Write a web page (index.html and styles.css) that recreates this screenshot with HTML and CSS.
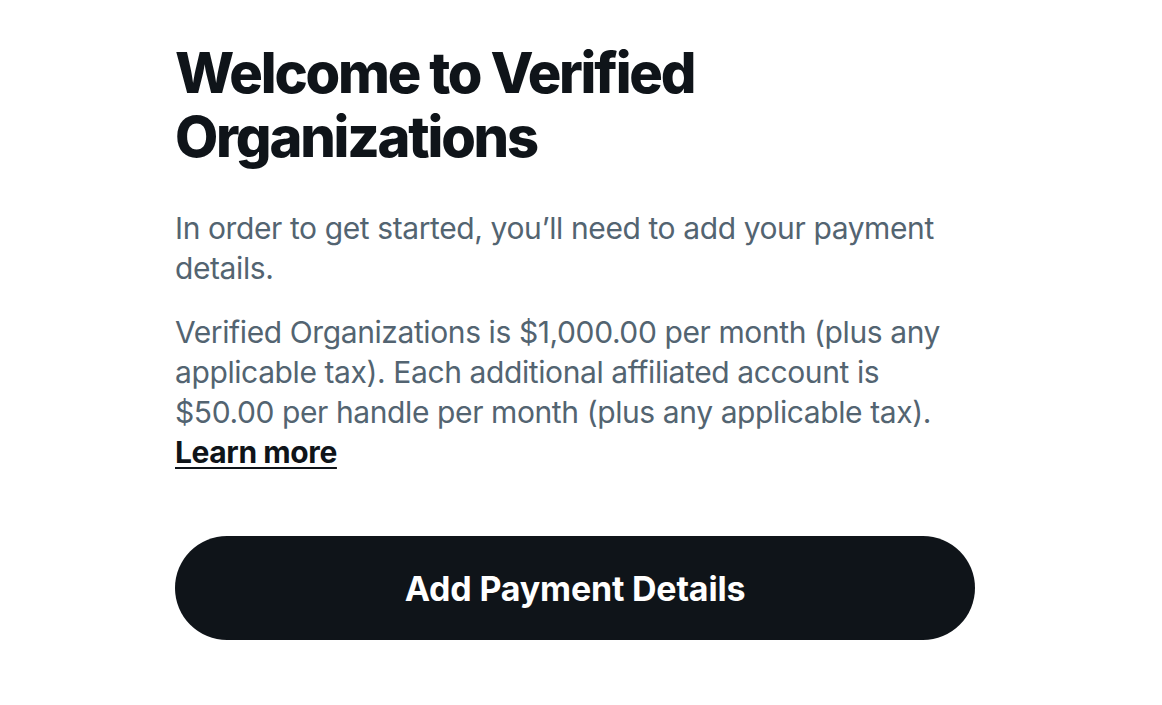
FILE: index.html
```html
<!DOCTYPE html>
<html lang="en">
<head>
<meta charset="utf-8">
<title>Welcome to Verified Organizations</title>
<link rel="stylesheet" href="styles.css">
</head>
<body>
<main class="page">
  <section class="panel">
    <h1 class="title">Welcome to Verified Organizations</h1>
    <p class="text first">In order to get started, you’ll need to add your payment details.</p>
    <p class="text">Verified Organizations is $1,000.00 per month (plus any applicable tax). Each additional affiliated account is $50.00 per handle per month (plus any applicable tax). <a class="link" href="#">Learn more</a></p>
    <button class="cta" type="button">Add Payment Details</button>
  </section>
</main>
</body>
</html>
```

FILE: styles.css
```css
html, body {
  margin: 0;
  padding: 0;
  background: #ffffff;
}
body {
  font-family: Inter, "Liberation Sans", Arial, sans-serif;
  color: #0f1419;
}
.page {
  padding: 41px 0 0 175px;
}
.panel {
  width: 800px;
  display: flex;
  flex-direction: column;
  align-items: stretch;
}
.title {
  margin: 0;
  font-size: 56px;
  line-height: 64px;
  font-weight: 800;
  letter-spacing: -2.2px;
  color: #0f1419;
}
.text {
  margin: 0;
  font-size: 30px;
  line-height: 40px;
  font-weight: 400;
  letter-spacing: -0.4px;
  color: #536471;
}
.text.first {
  margin-top: 39px;
  margin-bottom: 24px;
}
.link {
  color: #0f1419;
  font-weight: 700;
  text-decoration: underline;
  text-decoration-thickness: 2px;
  text-underline-offset: 4px;
}
.cta {
  margin-top: 64px;
  height: 104px;
  border: none;
  border-radius: 52px;
  background: #0f1419;
  color: #ffffff;
  font-family: inherit;
  font-size: 34px;
  font-weight: 700;
  letter-spacing: -0.2px;
  cursor: pointer;
}
```
